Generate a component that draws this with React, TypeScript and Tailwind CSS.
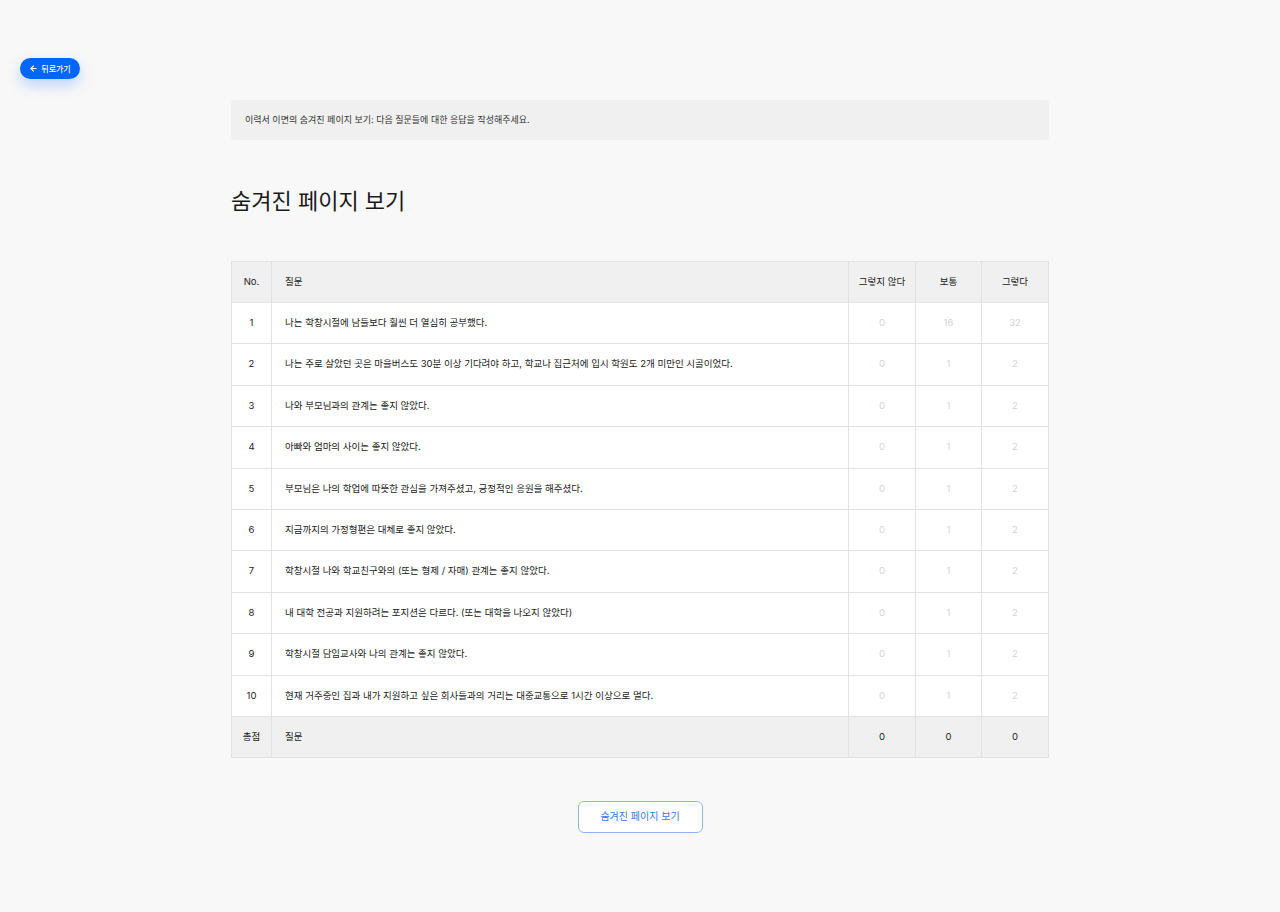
import { ArrowLeft } from 'lucide-react';

const questions = [
  '나는 학창시절에 남들보다 훨씬 더 열심히 공부했다.',
  '나는 주로 살았던 곳은 마을버스도 30분 이상 기다려야 하고, 학교나 집근처에 입시 학원도 2개 미만인 시골이었다.',
  '나와 부모님과의 관계는 좋지 않았다.',
  '아빠와 엄마의 사이는 좋지 않았다.',
  '부모님은 나의 학업에 따뜻한 관심을 가져주셨고, 긍정적인 응원을 해주셨다.',
  '지금까지의 가정형편은 대체로 좋지 않았다.',
  '학창시절 나와 학교친구와의 (또는 형제 / 자매) 관계는 좋지 않았다.',
  '내 대학 전공과 지원하려는 포지션은 다르다. (또는 대학을 나오지 않았다)',
  '학창시절 담임교사와 나의 관계는 좋지 않았다.',
  '현재 거주중인 집과 내가 지원하고 싶은 회사들과의 거리는 대중교통으로 1시간 이상으로 멀다.',
];

const font = { fontFamily: 'Inter, "Noto Sans CJK KR", sans-serif' };

export default function App() {
  return (
    <div className="min-h-[912px] bg-[#f8f8f8] text-[#222]" style={font}>
      <div className="px-5 pt-[58px]">
        <button className="flex h-[21px] w-[60px] items-center justify-center gap-[3px] rounded-full bg-[#0066ff] text-[8px] font-medium text-white shadow-[0_6px_14px_rgba(0,102,255,0.25)]">
          <ArrowLeft className="h-[9px] w-[9px]" strokeWidth={3} />
          뒤로가기
        </button>
      </div>

      <div className="mx-auto mt-[21px] w-[818px]">
        <div className="flex h-10 items-center rounded-sm bg-[#f0f0f0] px-[14px] text-[9px] text-[#333]">
          이력서 이면의 숨겨진 페이지 보기: 다음 질문들에 대한 응답을 작성해주세요.
        </div>

        <h1 className="mt-[45px] text-[22px] font-normal leading-8 text-[#1a1a1a]">숨겨진 페이지 보기</h1>

        <table className="mt-[44px] w-full border-collapse border border-[#e2e2e2] text-[9.5px]">
          <thead>
            <tr className="h-[41px] bg-[#f0f0f0]">
              <th className="w-10 border border-[#e2e2e2] font-normal">No.</th>
              <th className="border border-[#e2e2e2] px-[13px] text-left font-normal">질문</th>
              <th className="w-[67px] border border-[#e2e2e2] font-normal">그렇지 않다</th>
              <th className="w-[66px] border border-[#e2e2e2] font-normal">보통</th>
              <th className="w-[67px] border border-[#e2e2e2] font-normal">그렇다</th>
            </tr>
          </thead>
          <tbody>
            {questions.map((q, i) => (
              <tr key={i} className="h-[41.4px] bg-white">
                <td className="border border-[#e2e2e2] text-center">{i + 1}</td>
                <td className="border border-[#e2e2e2] px-[13px]">{q}</td>
                <td className="border border-[#e2e2e2] text-center text-[#d4d4d4]">0</td>
                <td className="border border-[#e2e2e2] text-center text-[#d4d4d4]">{i === 0 ? 16 : 1}</td>
                <td className="border border-[#e2e2e2] text-center text-[#d4d4d4]">{i === 0 ? 32 : 2}</td>
              </tr>
            ))}
            <tr className="h-[41px] bg-[#f0f0f0]">
              <td className="border border-[#e2e2e2] text-center">총점</td>
              <td className="border border-[#e2e2e2] px-[13px]">질문</td>
              <td className="border border-[#e2e2e2] text-center">0</td>
              <td className="border border-[#e2e2e2] text-center">0</td>
              <td className="border border-[#e2e2e2] text-center">0</td>
            </tr>
          </tbody>
        </table>

        <div className="mt-[43px] flex justify-center">
          <button className="h-[32px] w-[125px] rounded-md border border-[#8fb4f5] bg-white text-[10px] text-[#2f7bf0]">
            숨겨진 페이지 보기
          </button>
        </div>
      </div>
    </div>
  );
}
